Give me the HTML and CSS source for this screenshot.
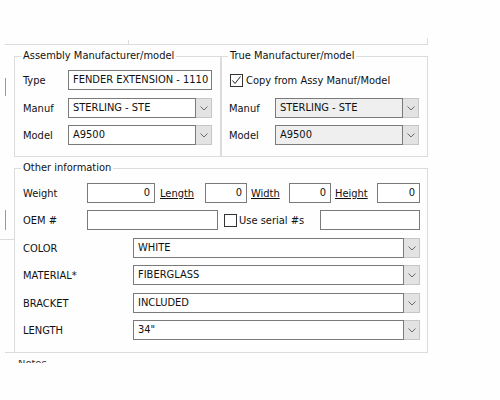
FILE: index.html
```html
<!DOCTYPE html>
<html>
<head>
<meta charset="utf-8">
<link rel="stylesheet" href="styles.css">
</head>
<body>
<div class="page">
  <div class="prev"><div class="tick"></div></div>
  <div class="main">
    <div class="gutter">
      <div class="frag v1"></div>
      <div class="frag v2"></div>
      <div class="frag h1"></div>
      <div class="frag h2"></div>
    </div>
    <div class="content">
      <div class="toprow">
        <fieldset class="group assy">
          <legend>Assembly Manufacturer/model</legend>
          <div class="row">
            <span class="lbl l45">Type</span>
            <div class="box w144">FENDER EXTENSION - 1110</div>
          </div>
          <div class="row g8">
            <span class="lbl l45">Manuf</span>
            <div class="combo w144"><div class="ctext">STERLING - STE</div><div class="cbtn"><svg width="8" height="5" viewBox="0 0 8 5"><polyline points="0.5,0.5 4,4 7.5,0.5" fill="none" stroke="#6a6a6a" stroke-width="1"/></svg></div></div>
          </div>
          <div class="row g7">
            <span class="lbl l45">Model</span>
            <div class="combo w144"><div class="ctext">A9500</div><div class="cbtn"><svg width="8" height="5" viewBox="0 0 8 5"><polyline points="0.5,0.5 4,4 7.5,0.5" fill="none" stroke="#6a6a6a" stroke-width="1"/></svg></div></div>
          </div>
        </fieldset>
        <fieldset class="group true">
          <legend>True Manufacturer/model</legend>
          <div class="row">
            <span class="check copy-check"><svg width="11" height="11" viewBox="0 0 11 11"><polyline points="1.5,5.5 4,8.5 9.5,1.5" fill="none" stroke="#222" stroke-width="1"/></svg></span>
            <span class="check-label">Copy from Assy Manuf/Model</span>
          </div>
          <div class="row g8">
            <span class="lbl l46">Manuf</span>
            <div class="combo w144 disabled"><div class="ctext">STERLING - STE</div><div class="cbtn"><svg width="8" height="5" viewBox="0 0 8 5"><polyline points="0.5,0.5 4,4 7.5,0.5" fill="none" stroke="#6a6a6a" stroke-width="1"/></svg></div></div>
          </div>
          <div class="row g7">
            <span class="lbl l46">Model</span>
            <div class="combo w144 disabled"><div class="ctext">A9500</div><div class="cbtn"><svg width="8" height="5" viewBox="0 0 8 5"><polyline points="0.5,0.5 4,4 7.5,0.5" fill="none" stroke="#6a6a6a" stroke-width="1"/></svg></div></div>
          </div>
        </fieldset>
      </div>
      <fieldset class="group other">
        <legend>Other information</legend>
        <div class="row">
          <span class="lbl l64">Weight</span>
          <div class="box num w68">0</div>
          <span class="link c50">Length</span>
          <div class="box num w42">0</div>
          <span class="link c42">Width</span>
          <div class="box num w42">0</div>
          <span class="link c46">Height</span>
          <div class="box num w43">0</div>
        </div>
        <div class="row g7">
          <span class="lbl l64">OEM #</span>
          <div class="box w131"></div>
          <span class="serial-wrap"><span class="check"></span><span class="check-label">Use serial #s</span></span>
          <div class="box w100"></div>
        </div>
        <div class="row g8">
          <span class="lbl l110">COLOR</span>
          <div class="combo w287"><div class="ctext">WHITE</div><div class="cbtn"><svg width="8" height="5" viewBox="0 0 8 5"><polyline points="0.5,0.5 4,4 7.5,0.5" fill="none" stroke="#6a6a6a" stroke-width="1"/></svg></div></div>
        </div>
        <div class="row g7">
          <span class="lbl l110">MATERIAL*</span>
          <div class="combo w287"><div class="ctext">FIBERGLASS</div><div class="cbtn"><svg width="8" height="5" viewBox="0 0 8 5"><polyline points="0.5,0.5 4,4 7.5,0.5" fill="none" stroke="#6a6a6a" stroke-width="1"/></svg></div></div>
        </div>
        <div class="row g8">
          <span class="lbl l110">BRACKET</span>
          <div class="combo w287"><div class="ctext">INCLUDED</div><div class="cbtn"><svg width="8" height="5" viewBox="0 0 8 5"><polyline points="0.5,0.5 4,4 7.5,0.5" fill="none" stroke="#6a6a6a" stroke-width="1"/></svg></div></div>
        </div>
        <div class="row g7">
          <span class="lbl l110">LENGTH</span>
          <div class="combo w287"><div class="ctext">34"</div><div class="cbtn"><svg width="8" height="5" viewBox="0 0 8 5"><polyline points="0.5,0.5 4,4 7.5,0.5" fill="none" stroke="#6a6a6a" stroke-width="1"/></svg></div></div>
        </div>
      </fieldset>
    </div>
  </div>
  <div class="notes"><div class="notes-text">Notes</div></div>
</div>
</body>
</html>
```
FILE: styles.css
```css
html, body {
  margin: 0;
  background: #fefefe;
}
body {
  font-family: "DejaVu Sans Condensed", "DejaVu Sans", sans-serif;
  font-stretch: condensed;
  font-size: 11px;
  color: #111;
}
.page {
  padding-top: 38px;
}
.prev {
  margin-left: 5px;
  width: 422px;
  height: 6px;
  border-right: 1px solid #dcdcdc;
  border-bottom: 1px solid #dcdcdc;
  overflow: hidden;
}
.tick {
  margin-left: 123px;
  margin-top: 2px;
  width: 1px;
  height: 4px;
  background: #dcdcdc;
}
.main {
  display: flex;
}
.gutter {
  width: 14px;
  flex: none;
  display: flex;
  flex-direction: column;
}
.frag { flex: none; }
.v1 { margin-top: 33px; margin-left: 5px; width: 1px; height: 18px; background: #9a9a9a; }
.v2 { margin-top: 114px; margin-left: 5px; width: 1px; height: 20px; background: #9a9a9a; }
.h1 { margin-top: 9px; width: 14px; height: 1px; background: #dcdcdc; }
.h2 { margin-top: 112px; margin-left: 5px; width: 9px; height: 1px; background: #dcdcdc; }
.content {
  width: 414px;
  flex: none;
}
.toprow {
  display: flex;
  margin-top: 4px;
}
.group {
  margin: 0;
  border: 1px solid #dcdcdc;
  min-width: 0;
  box-sizing: border-box;
}
.group legend {
  padding: 0 2px;
  margin-left: -2px;
  line-height: 14px;
}
.true legend {
  margin-left: -1px;
}
.assy {
  width: 207px;
  padding: 7px 0 11px 8px;
}
.true {
  width: 207px;
  padding: 7px 0 11px 7px;
}
.other {
  width: 414px;
  margin-top: 4px;
  padding: 8px 0 12px 8px;
}
.row {
  display: flex;
  align-items: center;
  height: 20px;
}
.g7 { margin-top: 7px; }
.g8 { margin-top: 8px; }
.lbl { flex: none; white-space: nowrap; }
.l45 { width: 45px; }
.l46 { width: 46px; }
.l64 { width: 64px; }
.l110 { width: 110px; }
.box {
  box-sizing: border-box;
  height: 20px;
  border: 1px solid #7a7a7a;
  background: #fff;
  padding: 0 4px;
  line-height: 18px;
  white-space: nowrap;
  overflow: hidden;
  flex: none;
}
.num { text-align: right; }
.w42 { width: 42px; }
.w43 { width: 43px; }
.w68 { width: 68px; }
.w100 { width: 100px; }
.w131 { width: 131px; }
.w144 { width: 144px; }
.w287 { width: 287px; }
.link {
  flex: none;
  box-sizing: border-box;
  text-decoration: underline;
  white-space: nowrap;
}
.c50 { width: 50px; padding-left: 5px; }
.c42 { width: 42px; padding-left: 4px; }
.c46 { width: 46px; padding-left: 4px; }
.combo {
  display: flex;
  height: 20px;
  flex: none;
}
.ctext {
  flex: 1;
  box-sizing: border-box;
  border: 1px solid #7a7a7a;
  background: #fff;
  padding: 0 4px;
  line-height: 18px;
  white-space: nowrap;
  overflow: hidden;
}
.disabled .ctext {
  background: #efefef;
}
.cbtn {
  flex: none;
  width: 16px;
  box-sizing: border-box;
  border: 1px solid #c6c6c6;
  border-left: none;
  background: #e3e3e3;
  display: flex;
  align-items: center;
  justify-content: center;
  padding-top: 1px;
}
.cbtn svg { display: block; }
.check {
  flex: none;
  box-sizing: border-box;
  width: 13px;
  height: 13px;
  border: 1px solid #333;
  background: #fff;
  display: flex;
  align-items: center;
  justify-content: center;
}
.check svg { display: block; }
.copy-check { margin-left: 1px; }
.check-label {
  margin-left: 3px;
  white-space: nowrap;
}
.serial-wrap {
  flex: none;
  box-sizing: border-box;
  width: 102px;
  padding-left: 6px;
  display: flex;
  align-items: center;
}
.serial-wrap .check-label { margin-left: 2px; }
.notes {
  margin-left: 18px;
  margin-top: 7px;
  height: 3px;
  overflow: hidden;
}
.notes-text {
  margin-top: -3px;
  line-height: 14px;
  color: #333;
}
```
